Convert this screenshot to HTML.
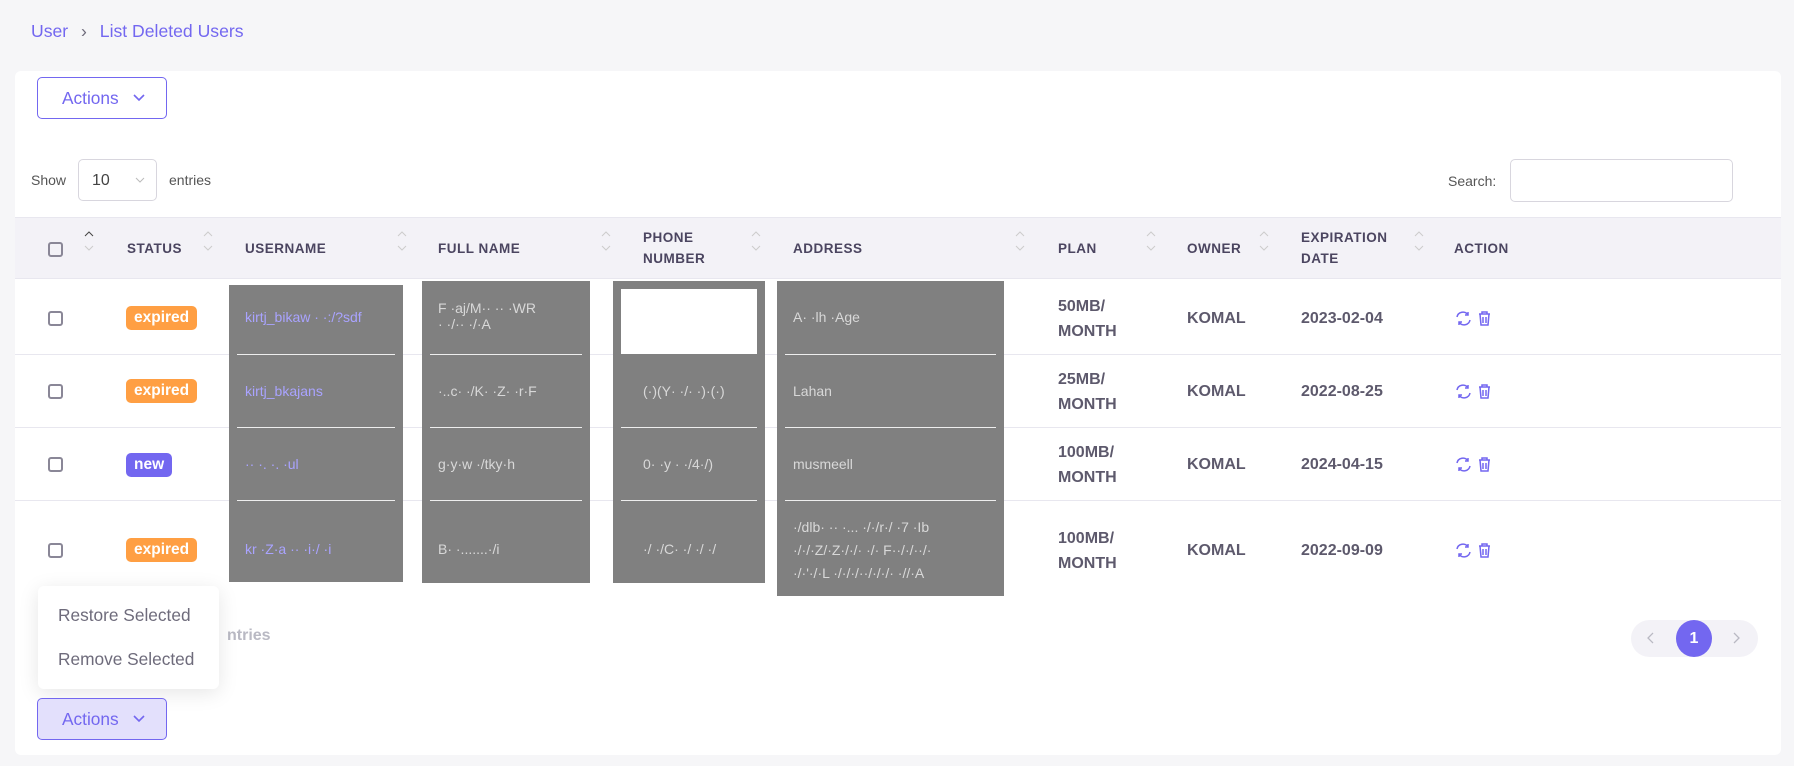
<!DOCTYPE html>
<html><head><meta charset="utf-8"><style>
*{box-sizing:border-box;margin:0;padding:0}
body{width:1794px;height:766px;background:#f6f6f8;font-family:"Liberation Sans",sans-serif;position:relative;overflow:hidden}
.a{position:absolute}
.card{left:15px;top:71px;width:1766px;height:684px;background:#fff;border-radius:6px}
.btn{width:130px;height:42px;border:1px solid #7367f0;border-radius:5px;color:#7367f0;font-size:17.3px;display:flex;align-items:center;padding-left:24px}
.btn svg{margin-left:14px}
.th{font-size:13.5px;font-weight:bold;color:#4b4560;letter-spacing:.5px;line-height:21px}
.cb{width:15px;height:15px;border:2px solid #8a8797;border-radius:3px}
.badge{height:24px;border-radius:5px;color:#fff;font-weight:bold;font-size:15.5px;line-height:24px;padding:0 8px}
.td{font-size:16px;font-weight:bold;color:#5d596c;line-height:25px}
.sep{left:15px;width:1766px;height:1px;background:#e8e7ef}
.gray{background:#808080}
.wl{height:1px;background:#eee}
.gt{font-size:14px;color:#d8d8d8;white-space:nowrap}
</style></head><body>
<div class="a" style="left:31px;top:21px;font-size:17.6px;color:#7367f0">User <span style="color:#6e6b7b;margin:0 8px">›</span> List Deleted Users</div>
<div class="a card"></div>
<div class="a btn" style="left:37px;top:77px">Actions <svg width="12" height="8" viewBox="0 0 12 8"><path d="M1 1l5 5 5-5" fill="none" stroke="#7367f0" stroke-width="1.6"/></svg></div>
<div class="a" style="left:31px;top:172px;font-size:14px;color:#555">Show</div>
<div class="a" style="left:78px;top:159px;width:79px;height:42px;border:1px solid #d8d6de;border-radius:5px;font-size:16px;color:#444;padding:12px 0 0 13px">10<svg class="a" style="left:56px;top:17px" width="10" height="6" viewBox="0 0 10 6"><path d="M1 1l4 4 4-4" fill="none" stroke="#bbb" stroke-width="1"/></svg></div>
<div class="a" style="left:169px;top:172px;font-size:14px;color:#555">entries</div>
<div class="a" style="left:1448px;top:173px;font-size:14px;color:#555">Search:</div>
<div class="a" style="left:1510px;top:159px;width:223px;height:43px;border:1px solid #d8d6de;border-radius:5px"></div>
<div class="a" style="left:15px;top:217px;width:1766px;height:62px;background:#f3f2f7;border-top:1px solid #e8e7ef;border-bottom:1px solid #e8e7ef"></div>
<div class="a cb" style="left:48px;top:242px"></div>
<div class="a th" style="left:127px;top:238px">STATUS</div>
<div class="a th" style="left:245px;top:238px">USERNAME</div>
<div class="a th" style="left:438px;top:238px">FULL NAME</div>
<div class="a th" style="left:643px;top:227px">PHONE<br>NUMBER</div>
<div class="a th" style="left:793px;top:238px">ADDRESS</div>
<div class="a th" style="left:1058px;top:238px">PLAN</div>
<div class="a th" style="left:1187px;top:238px">OWNER</div>
<div class="a th" style="left:1301px;top:227px">EXPIRATION<br>DATE</div>
<div class="a th" style="left:1454px;top:238px">ACTION</div>
<svg class="a" style="left:0;top:0" width="1794" height="300">
<g fill="none" stroke-width="1">
<path d="M85 236l4-4 4 4" stroke="#444"/><path d="M85 246l4 4 4-4" stroke="#ccc"/>
<g stroke="#ccc">
<path d="M204 236l4-4 4 4M204 246l4 4 4-4"/><path d="M398 236l4-4 4 4M398 246l4 4 4-4"/><path d="M602 236l4-4 4 4M602 246l4 4 4-4"/><path d="M752 236l4-4 4 4M752 246l4 4 4-4"/><path d="M1016 236l4-4 4 4M1016 246l4 4 4-4"/><path d="M1147 236l4-4 4 4M1147 246l4 4 4-4"/><path d="M1260 236l4-4 4 4M1260 246l4 4 4-4"/><path d="M1415 236l4-4 4 4M1415 246l4 4 4-4"/>
</g></g></svg>
<div class="a sep" style="top:354px"></div>
<div class="a sep" style="top:427px"></div>
<div class="a sep" style="top:500px"></div>

<div class="a cb" style="left:48px;top:311px"></div>
<div class="a badge" style="left:126px;top:306px;background:#ff9f43">expired</div>
<div class="a cb" style="left:48px;top:384px"></div>
<div class="a badge" style="left:126px;top:379px;background:#ff9f43">expired</div>
<div class="a cb" style="left:48px;top:457px"></div>
<div class="a badge" style="left:126px;top:453px;background:#7367f0">new</div>
<div class="a cb" style="left:48px;top:543px"></div>
<div class="a badge" style="left:126px;top:538px;background:#ff9f43">expired</div>

<div class="a td" style="left:1058px;top:294px">50MB/<br>MONTH</div>
<div class="a td" style="left:1058px;top:367px">25MB/<br>MONTH</div>
<div class="a td" style="left:1058px;top:440px">100MB/<br>MONTH</div>
<div class="a td" style="left:1058px;top:526px">100MB/<br>MONTH</div>
<div class="a td" style="left:1187px;top:306px">KOMAL</div>
<div class="a td" style="left:1187px;top:379px">KOMAL</div>
<div class="a td" style="left:1187px;top:452px">KOMAL</div>
<div class="a td" style="left:1187px;top:538px">KOMAL</div>
<div class="a td" style="left:1301px;top:306px">2023-02-04</div>
<div class="a td" style="left:1301px;top:379px">2022-08-25</div>
<div class="a td" style="left:1301px;top:452px">2024-04-15</div>
<div class="a td" style="left:1301px;top:538px">2022-09-09</div>

<svg class="a" style="left:0;top:0" width="1794" height="766">
<defs><g id="ic" fill="none" stroke="#7367f0" stroke-width="1.5">
<path d="M2 6a6 6 0 0 1 11-2M15 9a6 6 0 0 1-11 2"/><path d="M13 1v3h-3M4 14v-3h3"/>
<path d="M24 3h11M27 3V1h5v2M25 3l1 11h7l1-11M28 6v6M31 6v6"/></g></defs>
<use href="#ic" x="1455" y="311"/><use href="#ic" x="1455" y="384"/><use href="#ic" x="1455" y="457"/><use href="#ic" x="1455" y="543"/>
</svg>

<div class="a gray" style="left:229px;top:285px;width:174px;height:297px"></div>
<div class="a gray" style="left:422px;top:281px;width:168px;height:302px"></div>
<div class="a gray" style="left:613px;top:281px;width:152px;height:302px"></div>
<div class="a gray" style="left:777px;top:281px;width:227px;height:315px"></div>
<div class="a" style="left:621px;top:289px;width:136px;height:65px;background:#fff"></div>
<div class="a wl" style="left:237px;top:354px;width:158px"></div><div class="a wl" style="left:237px;top:427px;width:158px"></div><div class="a wl" style="left:237px;top:500px;width:158px"></div>
<div class="a wl" style="left:430px;top:354px;width:152px"></div><div class="a wl" style="left:430px;top:427px;width:152px"></div><div class="a wl" style="left:430px;top:500px;width:152px"></div>
<div class="a wl" style="left:621px;top:427px;width:136px"></div><div class="a wl" style="left:621px;top:500px;width:136px"></div>
<div class="a wl" style="left:785px;top:354px;width:211px"></div><div class="a wl" style="left:785px;top:427px;width:211px"></div><div class="a wl" style="left:785px;top:500px;width:211px"></div>
<div class="a gt" style="left:245px;top:309px;color:#a9a3ff">kirtj_bikaw · ·:/?sdf</div>
<div class="a gt" style="left:245px;top:383px;color:#a9a3ff">kirtj_bkajans</div>
<div class="a gt" style="left:245px;top:456px;color:#a9a3ff">·· ·. ·. ·ul</div>
<div class="a gt" style="left:245px;top:541px;color:#a9a3ff">kr ·Z·a ·· ·i·/ ·i</div>
<div class="a gt" style="left:438px;top:300px">F ·aj/M·· ·· ·WR<br>· ·/·· ·/·A</div>
<div class="a gt" style="left:438px;top:383px">·..c· ·/K· ·Z· ·r·F</div>
<div class="a gt" style="left:438px;top:456px">g·y·w ·/tky·h</div>
<div class="a gt" style="left:438px;top:541px">B· ·.......·/i</div>
<div class="a gt" style="left:643px;top:383px">(·)(Y· ·/· ·)·(·)</div>
<div class="a gt" style="left:643px;top:456px">0· ·y · ·/4·/)</div>
<div class="a gt" style="left:643px;top:541px">·/ ·/C· ·/ ·/ ·/</div>
<div class="a gt" style="left:793px;top:309px">A· ·lh ·Age</div>
<div class="a gt" style="left:793px;top:383px">Lahan</div>
<div class="a gt" style="left:793px;top:456px">musmeell</div>
<div class="a gt" style="left:793px;top:516px;line-height:23px">·/dlb· ·· ·... ·/·/r·/ ·7 ·Ib<br>·/·/·Z/·Z·/·/· ·/· F··/·/··/·<br>·/·'·/·L ·/·/·/··/·/·/· ·//·A</div>

<div class="a" style="left:227px;top:627px;font-size:16px;font-weight:bold;color:#b9b9c3">ntries</div>
<div class="a" style="left:38px;top:586px;width:181px;height:103px;background:#fff;border-radius:6px;box-shadow:0 4px 20px rgba(0,0,0,.1);font-size:17.3px;color:#6e6b7b">
<div class="a" style="left:20px;top:19px">Restore Selected</div><div class="a" style="left:20px;top:63px">Remove Selected</div></div>
<div class="a btn" style="left:37px;top:698px;background:#e3e0fc">Actions <svg width="12" height="8" viewBox="0 0 12 8"><path d="M1 1l5 5 5-5" fill="none" stroke="#7367f0" stroke-width="1.6"/></svg></div>
<div class="a" style="left:1631px;top:620px;width:127px;height:37px;background:#f3f2f7;border-radius:19px"></div>
<div class="a" style="left:1676px;top:620px;width:36px;height:37px;background:#7367f0;border-radius:50%;color:#fff;font-weight:bold;font-size:16px;text-align:center;line-height:37px">1</div>
<svg class="a" style="left:1645px;top:631px" width="100" height="14"><path d="M8 2l-5 5 5 5M89 2l5 5-5 5" fill="none" stroke="#b9b9c3" stroke-width="1.3"/></svg>
</body></html>
